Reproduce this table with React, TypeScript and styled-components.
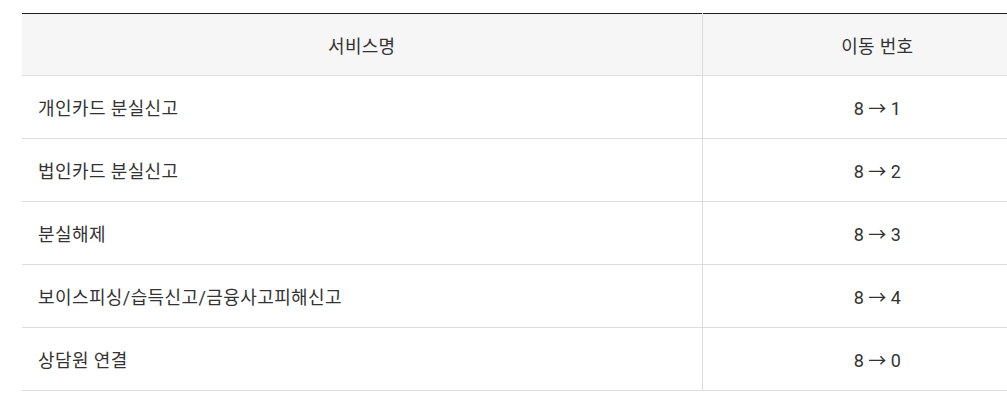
import styled, { createGlobalStyle } from "styled-components";

const GlobalStyle = createGlobalStyle`
    html, body {
        margin: 0;
        padding: 0;
        background: #fff;
        overflow: hidden;
    }
    body {
        font-family: Roboto, "Noto Sans CJK KR", sans-serif;
        color: #333;
    }
`

const rows = [
    {name: "개인카드 분실신고", to: "1"},
    {name: "법인카드 분실신고", to: "2"},
    {name: "분실해제", to: "3"},
    {name: "보이스피싱/습득신고/금융사고피해신고", to: "4"},
    {name: "상담원 연결", to: "0"},
]

export default function App() {
    return (
        <>
            <GlobalStyle/>
            <Wrap>
                <TableStyled>
                    <colgroup>
                        <col style={{width: 680}}/>
                        <col/>
                    </colgroup>
                    <thead>
                    <tr>
                        <Th>서비스명</Th>
                        <Th>이동 번호</Th>
                    </tr>
                    </thead>
                    <tbody>
                    {rows.map((r) => (
                        <tr key={r.name}>
                            <Td>{r.name}</Td>
                            <Td center>8 → {r.to}</Td>
                        </tr>
                    ))}
                    </tbody>
                </TableStyled>
            </Wrap>
        </>
    )
}

const Wrap = styled.div`
    padding: 13px 0 0 22px;
    width: 1100px;
`

const TableStyled = styled.table`
    width: 1030px;
    border-collapse: collapse;
    table-layout: fixed;
    border-top: 1px solid #222;
`

const Th = styled.th`
    height: 61px;
    padding: 0;
    background: #f6f6f6;
    font-weight: 400;
    font-size: 18px;
    letter-spacing: 0.3px;
    color: #333;
    text-align: center;
    border-bottom: 1px solid #ddd;
    & + & {
        border-left: 1px solid #ddd;
    }
`

const Td = styled.td<{ center?: boolean }>`
    height: 62px;
    padding: 0 16px;
    font-size: 18px;
    letter-spacing: ${p => p.center ? "0" : "0.4px"};
    color: #333;
    text-align: ${p => p.center ? "center" : "left"};
    border-bottom: 1px solid #ddd;
    & + & {
        border-left: 1px solid #ddd;
    }
`
